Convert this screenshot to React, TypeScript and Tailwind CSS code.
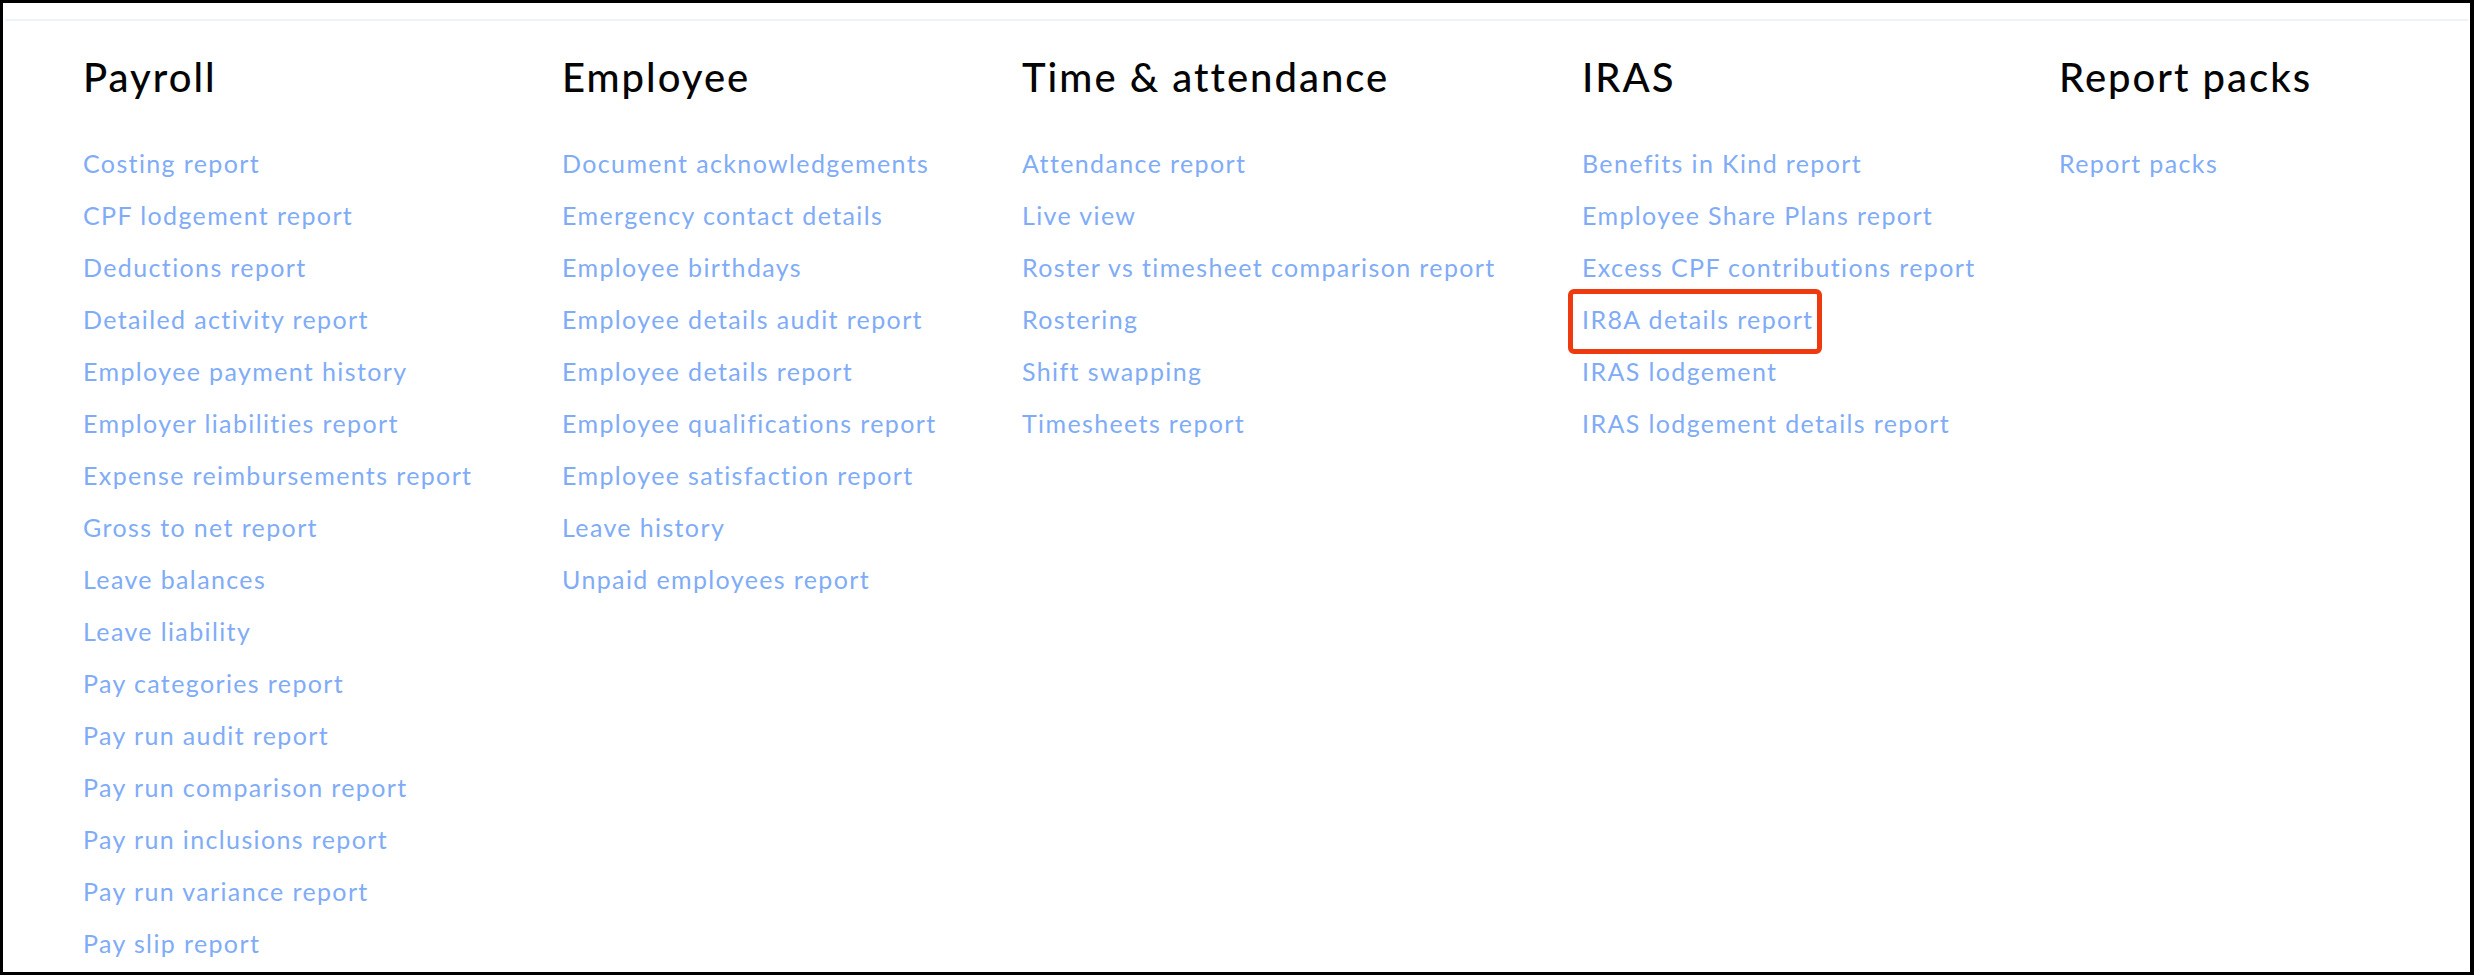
const columns = [
  {
    title: 'Payroll',
    width: 'w-[479px]',
    links: [
      'Costing report',
      'CPF lodgement report',
      'Deductions report',
      'Detailed activity report',
      'Employee payment history',
      'Employer liabilities report',
      'Expense reimbursements report',
      'Gross to net report',
      'Leave balances',
      'Leave liability',
      'Pay categories report',
      'Pay run audit report',
      'Pay run comparison report',
      'Pay run inclusions report',
      'Pay run variance report',
      'Pay slip report',
    ],
  },
  {
    title: 'Employee',
    width: 'w-[460px]',
    links: [
      'Document acknowledgements',
      'Emergency contact details',
      'Employee birthdays',
      'Employee details audit report',
      'Employee details report',
      'Employee qualifications report',
      'Employee satisfaction report',
      'Leave history',
      'Unpaid employees report',
    ],
  },
  {
    title: 'Time & attendance',
    width: 'w-[560px]',
    links: [
      'Attendance report',
      'Live view',
      'Roster vs timesheet comparison report',
      'Rostering',
      'Shift swapping',
      'Timesheets report',
    ],
  },
  {
    title: 'IRAS',
    width: 'w-[477px]',
    links: [
      'Benefits in Kind report',
      'Employee Share Plans report',
      'Excess CPF contributions report',
      'IR8A details report',
      'IRAS lodgement',
      'IRAS lodgement details report',
    ],
  },
  {
    title: 'Report packs',
    width: 'w-[400px]',
    links: ['Report packs'],
  },
];

const highlighted = 'IR8A details report';

export default function App() {
  return (
    <div className="w-[2474px] h-[975px] bg-black pl-[3px] pt-[3px] pr-[4px] pb-[3px] overflow-hidden">
      <div className="h-full bg-white font-['Lato',sans-serif]">
        <div className="h-[16px]" />
        <div className="h-[2px] mx-[2px] bg-[#eef3f8]" />
        <div className="flex pl-[80px] pt-[32px]">
          {columns.map((col) => (
            <div key={col.title} className={`${col.width} shrink-0`}>
              <h2 className="text-[40px] leading-[48px] font-medium tracking-[0.05em] text-[#050505]">{col.title}</h2>
              <ul className="mt-[36px]">
                {col.links.map((link) => (
                  <li key={link} className="text-[25px] leading-[52px] tracking-[0.055em] text-[#80acf7]">
                    <a href="#" className="relative inline-block">
                      {link}
                      {link === highlighted && (
                        <span className="absolute left-[-14px] top-[-4px] w-[254px] h-[65px] rounded-[6px] border-[5px] border-[#ef3a10]" />
                      )}
                    </a>
                  </li>
                ))}
              </ul>
            </div>
          ))}
        </div>
      </div>
    </div>
  );
}
